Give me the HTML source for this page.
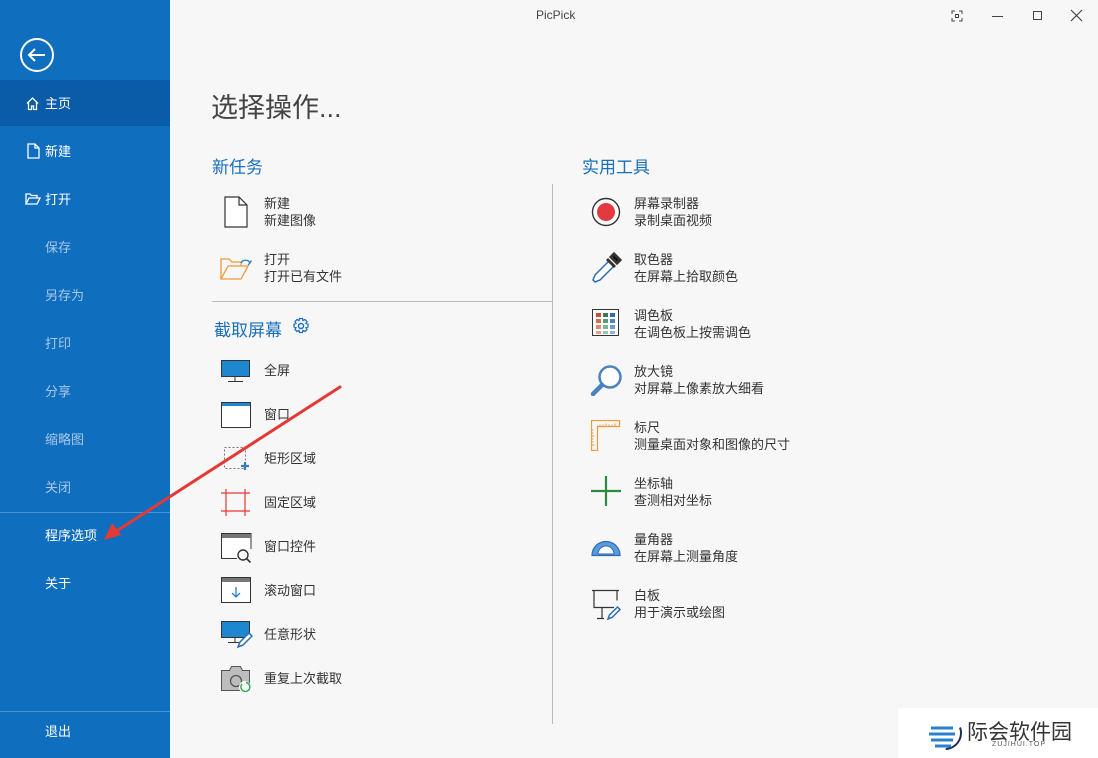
<!DOCTYPE html>
<html><head><meta charset="utf-8"><style>
*{margin:0;padding:0;box-sizing:border-box}
body{width:1098px;height:758px;background:#f7f7f7;font-family:"Liberation Sans","Noto Sans CJK SC",sans-serif;position:relative;overflow:hidden;color:#333}
.a{position:absolute;white-space:nowrap}
#sb{position:absolute;left:0;top:0;width:170px;height:758px;background:#106ebe}
.si{position:absolute;left:45px;font-size:13px;color:#fff;line-height:16px;margin-top:1px}
.dis{color:#a9c8e8}
.t{font-size:13px;line-height:17px;color:#333;margin-top:1px}
.ic{position:absolute}
</style></head><body>
<div id="sb">
 <svg class="ic" style="left:19px;top:37px" width="36" height="36"><circle cx="18" cy="18" r="16" fill="none" stroke="#fff" stroke-width="2"/><path d="M10 18h16M16 12l-6 6 6 6" fill="none" stroke="#fff" stroke-width="2"/></svg>
 <div style="position:absolute;left:0;top:80px;width:170px;height:46px;background:#0a5ca8"></div>
 <svg class="ic" style="left:25px;top:96px" width="15" height="15"><path d="M2 7.5L7.5 2 13 7.5M3.5 6v7.5h3V10h2v3.5h3V6" fill="none" stroke="#fff" stroke-width="1.3"/></svg>
 <div class="si" style="top:95px">主页</div>
 <svg class="ic" style="left:27px;top:143px" width="13" height="16"><path d="M1 1h7l4 4v10H1z M8 1v4h4" fill="none" stroke="#fff" stroke-width="1.3"/></svg>
 <div class="si" style="top:143px">新建</div>
 <svg class="ic" style="left:25px;top:192px" width="16" height="14"><path d="M1 12V2h4l1.5 1.5H12V6 M1 12l3-6h11l-3 6z" fill="none" stroke="#fff" stroke-width="1.3"/></svg>
 <div class="si" style="top:191px">打开</div>
 <div class="si dis" style="top:239px">保存</div>
 <div class="si dis" style="top:287px">另存为</div>
 <div class="si dis" style="top:335px">打印</div>
 <div class="si dis" style="top:383px">分享</div>
 <div class="si dis" style="top:431px">缩略图</div>
 <div class="si dis" style="top:479px">关闭</div>
 <div style="position:absolute;left:0;top:512px;width:170px;height:1px;background:#4a93d2"></div>
 <div class="si" style="top:527px">程序选项</div>
 <div class="si" style="top:575px">关于</div>
 <div style="position:absolute;left:0;top:711px;width:170px;height:1px;background:#4a93d2"></div>
 <div class="si" style="top:723px">退出</div>
</div>
<div class="a" style="left:536px;top:8px;font-size:12px;color:#444">PicPick</div>
<svg class="ic" style="left:950px;top:9px" width="14" height="14"><path d="M2 5V2h3M9 2h3v3M12 9v3H9M5 12H2V9" fill="none" stroke="#444"/><rect x="5.5" y="5.5" width="3" height="3" fill="none" stroke="#444"/></svg>
<div class="a" style="left:992px;top:16px;width:11px;height:1px;background:#444"></div>
<div class="a" style="left:1033px;top:11px;width:9px;height:9px;border:1px solid #444"></div>
<svg class="ic" style="left:1070px;top:9px" width="13" height="13"><path d="M1 1l11 11M12 1L1 12" stroke="#444" stroke-width="1.2"/></svg>

<div class="a" style="left:211px;top:86px;font-size:27px;color:#444">选择操作...</div>
<div class="a" style="left:212px;top:153px;font-size:17px;color:#1a6fbe">新任务</div>
<div class="a" style="left:582px;top:153px;font-size:17px;color:#1a6fbe">实用工具</div>
<div class="a" style="left:212px;top:301px;width:340px;height:1px;background:#bbb"></div>
<div class="a" style="left:552px;top:184px;width:1px;height:540px;background:#bbb"></div>
<div class="a" style="left:214px;top:316px;font-size:17px;color:#1a6fbe">截取屏幕</div>
<svg class="ic" style="left:292px;top:317px" width="18" height="18"><circle cx="9" cy="9" r="2.5" fill="none" stroke="#1a6fbe" stroke-width="1.4"/><path d="M7.5 1.5h3l.5 2 2-1 2 2-1 2 2 .5v3l-2 .5 1 2-2 2-2-1-.5 2h-3l-.5-2-2 1-2-2 1-2-2-.5v-3l2-.5-1-2 2-2 2 1z" fill="none" stroke="#1a6fbe" stroke-width="1.3"/></svg>

<svg class="ic" style="left:224px;top:196px" width="24" height="32"><path d="M1 1h14l8 8v22H1z M15 1v8h8" fill="#fff" stroke="#333" stroke-width="1.2"/></svg>
<div class="a t" style="left:264px;top:194px">新建<br>新建图像</div>
<svg class="ic" style="left:220px;top:255px" width="34" height="26"><path d="M1 24V4h8l3 3h9v4 M1 24l7-13h20l-7 13z" fill="none" stroke="#f29a3a" stroke-width="1.3"/><path d="M21 8a5 5 0 0 1 9 0 M30 8l-2 2M30 8l1.5-2.5" fill="none" stroke="#2c7fc5" stroke-width="1.3"/></svg>
<div class="a t" style="left:264px;top:250px">打开<br>打开已有文件</div>

<svg class="ic" style="left:221px;top:360px" width="30" height="23"><rect x="0.5" y="0.5" width="28" height="16" fill="#1e87d0" stroke="#333"/><path d="M14 17v4M7 21.5h15" stroke="#333"/></svg>
<div class="a t" style="left:264px;top:361px">全屏</div>
<svg class="ic" style="left:221px;top:402px" width="30" height="27"><rect x="0.5" y="0.5" width="29" height="25" fill="#fff" stroke="#333"/><rect x="1" y="1" width="28" height="3" fill="#1e87d0"/></svg>
<div class="a t" style="left:264px;top:405px">窗口</div>
<svg class="ic" style="left:223px;top:446px" width="28" height="26"><rect x="1.5" y="1.5" width="21" height="21" fill="none" stroke="#777" stroke-dasharray="2 2"/><path d="M22 16v8M18 20h8" stroke="#3b78c0" stroke-width="2.2"/></svg>
<div class="a t" style="left:264px;top:449px">矩形区域</div>
<svg class="ic" style="left:221px;top:489px" width="29" height="27"><path d="M5 0v27M24 0v27M0 4h29M0 22h29" stroke="#e53935" stroke-width="1.2"/></svg>
<div class="a t" style="left:264px;top:493px">固定区域</div>
<svg class="ic" style="left:221px;top:533px" width="32" height="30"><path d="M30 16V.5H.5v25H16" fill="#fff" stroke="#333"/><rect x="1" y="1" width="29" height="4" fill="#777"/><circle cx="22" cy="22" r="5" fill="none" stroke="#333" stroke-width="1.4"/><path d="M25.5 25.5l4 4" stroke="#333" stroke-width="1.6"/></svg>
<div class="a t" style="left:264px;top:537px">窗口控件</div>
<svg class="ic" style="left:221px;top:577px" width="30" height="27"><rect x="0.5" y="0.5" width="29" height="25" fill="#fff" stroke="#333"/><rect x="1" y="1" width="28" height="4" fill="#777"/><path d="M15 10v10M11 16l4 4 4-4" fill="none" stroke="#2c7fc5" stroke-width="1.3"/></svg>
<div class="a t" style="left:264px;top:581px">滚动窗口</div>
<svg class="ic" style="left:221px;top:621px" width="32" height="28"><rect x="0.5" y="0.5" width="28" height="16" fill="#1e87d0" stroke="#333"/><path d="M14 17v4M7 21.5h12" stroke="#333"/><path d="M17 26l2-5 9-9 3 3-9 9z" fill="#fff" stroke="#2c6bb5" stroke-width="1.5"/></svg>
<div class="a t" style="left:264px;top:625px">任意形状</div>
<svg class="ic" style="left:221px;top:664px" width="32" height="30"><path d="M.5 6.5h8l2-4h9l2 4h7v20H.5z" fill="#bdbdbd" stroke="#555"/><circle cx="15" cy="17" r="5.5" fill="none" stroke="#555" stroke-width="1.3"/><circle cx="24" cy="23" r="6" fill="#fff"/><path d="M21 20a4.5 4.5 0 1 0 4-1.5" fill="none" stroke="#2eaa4c" stroke-width="1.4"/></svg>
<div class="a t" style="left:264px;top:669px">重复上次截取</div>

<svg class="ic" style="left:591px;top:197px" width="30" height="30"><circle cx="15" cy="15" r="13.5" fill="#fff" stroke="#333" stroke-width="1.4"/><circle cx="15" cy="15" r="9" fill="#e53940"/></svg>
<div class="a t" style="left:634px;top:194px">屏幕录制器<br>录制桌面视频</div>
<svg class="ic" style="left:590px;top:252px" width="32" height="32"><path d="M19 9L5 23l-2 5 2 2 5-2 14-14" fill="#fff" stroke="#2c6bb5" stroke-width="1.5"/><path d="M17 7l8 8M21 5l3-3 6 6-3 3z" stroke="#333" stroke-width="3"/></svg>
<div class="a t" style="left:634px;top:250px">取色器<br>在屏幕上拾取颜色</div>
<svg class="ic" style="left:592px;top:309px" width="28" height="28"><rect x="0.5" y="0.5" width="26" height="26" fill="#fff" stroke="#333"/>
<rect x="4" y="4" width="5" height="4" fill="#d04a2e"/><rect x="11" y="4" width="5" height="4" fill="#3a7a5a"/><rect x="18" y="4" width="5" height="4" fill="#2c6bb5"/>
<rect x="4" y="10" width="5" height="4" fill="#d96a4e"/><rect x="11" y="10" width="5" height="4" fill="#5a9a7a"/><rect x="18" y="10" width="5" height="4" fill="#4c85c5"/>
<rect x="4" y="16" width="5" height="4" fill="#e08a70"/><rect x="11" y="16" width="5" height="4" fill="#7ab59a"/><rect x="18" y="16" width="5" height="4" fill="#6c9dd0"/>
<rect x="4" y="22" width="5" height="3" fill="#e6a08a"/><rect x="11" y="22" width="5" height="3" fill="#9ac5ae"/><rect x="18" y="22" width="5" height="3" fill="#8fb3da"/></svg>
<div class="a t" style="left:634px;top:306px">调色板<br>在调色板上按需调色</div>
<svg class="ic" style="left:590px;top:364px" width="34" height="32"><circle cx="20" cy="13" r="10.5" fill="#fff" stroke="#4a82c0" stroke-width="2.5"/><path d="M12 21L3 30" stroke="#4a82c0" stroke-width="4.5" stroke-linecap="round"/></svg>
<div class="a t" style="left:634px;top:362px">放大镜<br>对屏幕上像素放大细看</div>
<svg class="ic" style="left:591px;top:420px" width="30" height="31"><path d="M.5.5h28v6h-22v24h-6z" fill="none" stroke="#f29a3a" stroke-width="1.2"/><path d="M9 6.5v-2M12 6.5v-2M15 6.5v-3M18 6.5v-2M21 6.5v-2M24 6.5v-3M.5 10h2M.5 13h2M.5 16h3M.5 19h2M.5 22h2M.5 25h3" stroke="#f29a3a"/></svg>
<div class="a t" style="left:634px;top:418px">标尺<br>测量桌面对象和图像的尺寸</div>
<svg class="ic" style="left:591px;top:476px" width="30" height="30"><path d="M15 0v30M0 15h30" stroke="#2e8b3e" stroke-width="2.2"/></svg>
<div class="a t" style="left:634px;top:474px">坐标轴<br>查测相对坐标</div>
<svg class="ic" style="left:591px;top:539px" width="30" height="18"><path d="M1 16.5A14 14 0 0 1 29 16.5z" fill="#5a9be0" stroke="#2c6bb5" stroke-width="1.2"/><path d="M7 15a8 8 0 0 1 16 0z" fill="#fff" stroke="#2c6bb5"/></svg>
<div class="a t" style="left:634px;top:530px">量角器<br>在屏幕上测量角度</div>
<svg class="ic" style="left:591px;top:589px" width="32" height="32"><path d="M1 1.5h27M3 1.5v17h20M26 1.5v10M11 19v10M6 29.5h7" fill="none" stroke="#333" stroke-width="1.2"/><path d="M17 30l1.5-4 8-8 2.5 2.5-8 8z" fill="#fff" stroke="#2c6bb5" stroke-width="1.5"/></svg>
<div class="a t" style="left:634px;top:586px">白板<br>用于演示或绘图</div>

<svg class="ic" style="left:0;top:0" width="1098" height="758"><path d="M340 387L112 534" stroke="#e53935" stroke-width="3" stroke-linecap="round"/><path d="M104 540l8-17 9 12z" fill="#e53935"/></svg>

<div class="a" style="left:898px;top:708px;width:200px;height:50px;background:#fff"></div>
<svg class="ic" style="left:926px;top:714px" width="38" height="38"><circle cx="19" cy="19" r="16" fill="none" stroke="#1b2f5a" stroke-width="2" stroke-dasharray="30 200" transform="rotate(-20 19 19)"/><path d="M5 14h22M3 20h26M5 26h22M9 32h16" stroke="#2a7fd0" stroke-width="3"/></svg>
<div class="a" style="left:967px;top:716px;font-size:21px;color:#333">际会软件园</div>
<div class="a" style="left:992px;top:741px;font-size:7px;color:#555;letter-spacing:1px">ZUJIHUI.TOP</div>
</body></html>
